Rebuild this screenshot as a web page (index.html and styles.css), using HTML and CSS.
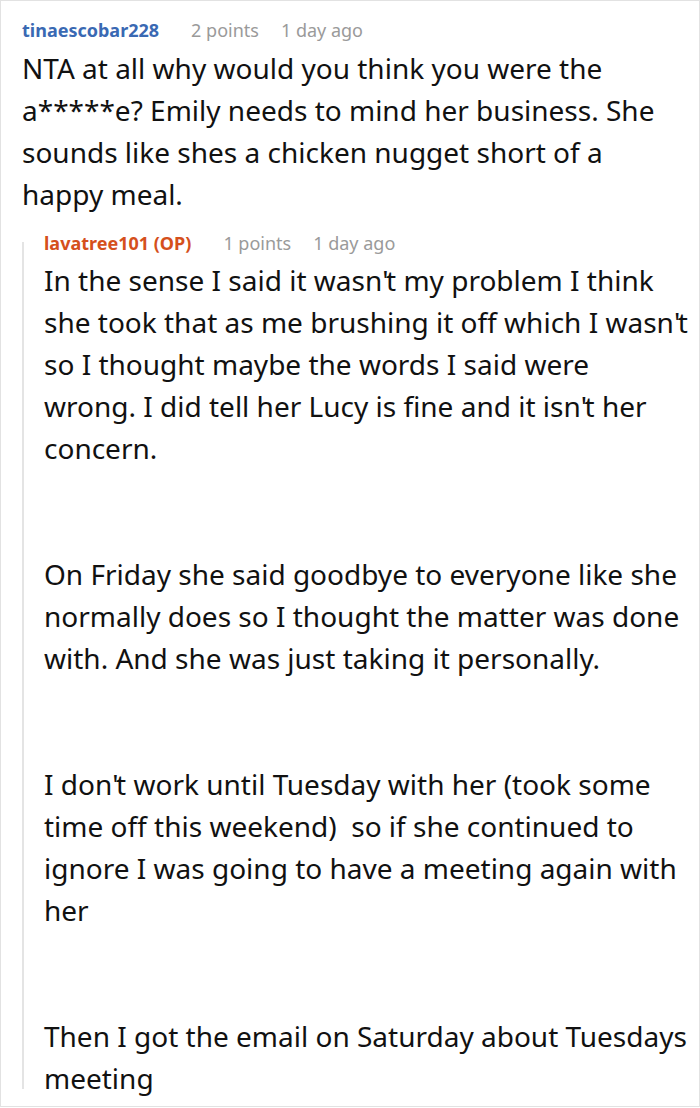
FILE: index.html
```html
<!DOCTYPE html>
<html>
<head>
<meta charset="utf-8">
<link rel="stylesheet" href="styles.css">
</head>
<body>
<div class="thread">
  <div class="comment">
    <div class="meta">
      <span class="user user-blue">tinaescobar228</span>
      <span class="info">2 points</span>
      <span class="info">1 day ago</span>
    </div>
    <div class="body">
      <p>NTA at all why would you think you were the a*****e? Emily needs to mind her business. She sounds like shes a chicken nugget short of a happy meal.</p>
    </div>
  </div>
  <div class="reply">
    <div class="rail"></div>
    <div class="comment reply-content">
      <div class="meta">
        <span class="user user-op">lavatree101 (OP)</span>
        <span class="info">1 points</span>
        <span class="info">1 day ago</span>
      </div>
      <div class="body">
        <p>In the sense I said it wasn<span class="ap">'</span>t my problem I think she took that as me brushing it off which I wasn<span class="ap">'</span>t so I thought maybe the words I said were wrong. I did tell her Lucy is fine and it isn<span class="ap">'</span>t her concern.</p>
        <p>On Friday she said goodbye to everyone like she normally does so I thought the matter was done with. And she was just taking it personally.</p>
        <p>I don<span class="ap">'</span>t work until Tuesday with her (took some time off this weekend)&nbsp; so if she continued to ignore I was going to have a meeting again with her</p>
        <p>Then I got the email on Saturday about Tuesdays meeting</p>
      </div>
    </div>
  </div>
</div>
</body>
</html>
```

FILE: styles.css
```css
html, body {
  margin: 0;
  padding: 0;
  background: #ffffff;
}

.thread {
  width: 700px;
  height: 1107px;
  box-sizing: border-box;
  border: 1px solid #e2e2e2;
  padding: 17px 11.1px 0 21px;
  font-family: "Noto Sans", "Open Sans", sans-serif;
  color: #111111;
  overflow: hidden;
}

.meta {
  display: flex;
  gap: 22px;
  font-size: 18px;
  line-height: 24px;
}

.user {
  font-weight: 700;
  margin-right: 10px;
}

.user-blue {
  color: #3a69b3;
}

.user-op {
  color: #d5501c;
}

.info {
  color: #9a9a9a;
}

.body {
  font-size: 28px;
  line-height: 42px;
  margin-top: 5px;
}

.body p {
  margin: 0;
}

.body p + p {
  margin-top: 84px;
}

.ap {
  letter-spacing: -2.5px;
}

.reply {
  display: flex;
  margin-top: 16px;
}

.rail {
  flex: 0 0 auto;
  width: 0;
  border-left: 2px solid #e4e4e4;
  margin-top: 11px;
  margin-bottom: 10px;
}

.reply-content {
  padding-left: 20px;
}

.reply-content .body {
  margin-top: 4px;
}
```
